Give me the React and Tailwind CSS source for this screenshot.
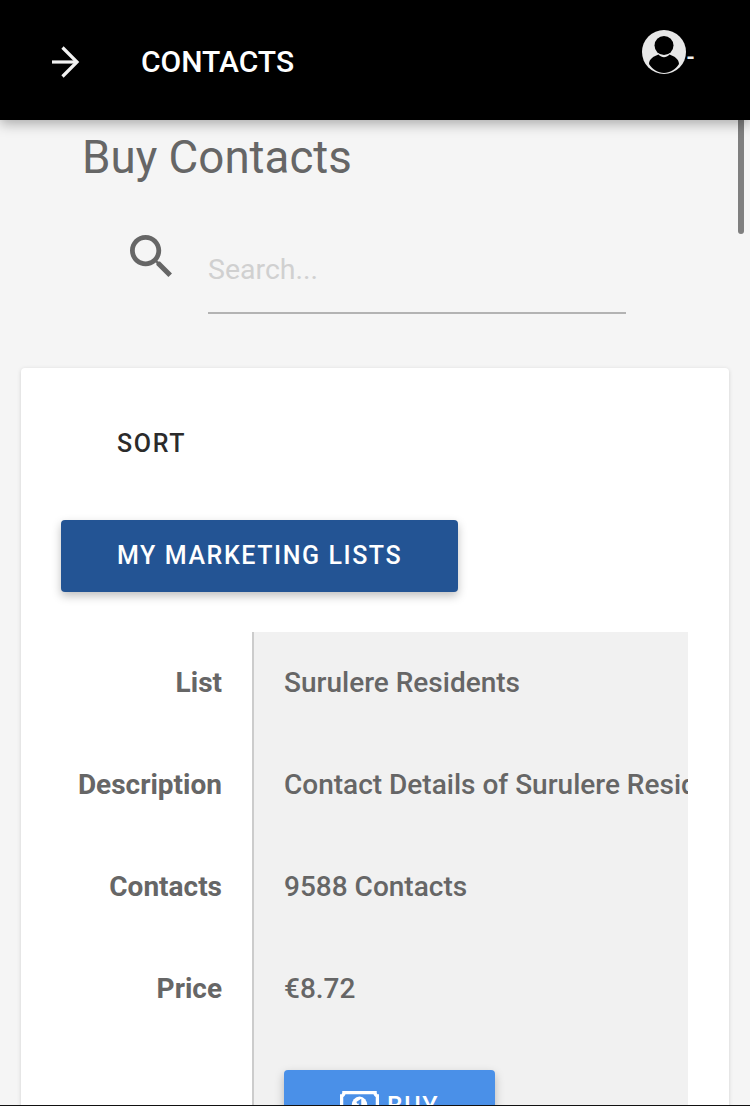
const rows = [
  { label: "List", value: "Surulere Residents" },
  { label: "Description", value: "Contact Details of Surulere Residents" },
  { label: "Contacts", value: "9588 Contacts" },
  { label: "Price", value: "€8.72" },
];

function ArrowIcon() {
  return (
    <svg width="30" height="32" viewBox="0 0 30 32" fill="none" stroke="#f2f2f2" strokeWidth="3.2">
      <path d="M1 16h24" />
      <path d="M11.500 1.500L26 16 11.500 30.500" />
    </svg>
  );
}

function AvatarIcon() {
  return (
    <svg width="44" height="44" viewBox="0 0 44 44">
      <circle cx="22" cy="22" r="22" fill="#e8e8e8" />
      <circle cx="22" cy="15.500" r="9.500" fill="#000" />
      <path d="M7 34c0-5 5-8 9.500-9.500 3.500 3.500 7.500 3.500 11 0 4.500 1.500 9.500 4.500 9.500 9.500-3.500 5.500-9 9-15 9s-11.500-3.500-15-9z" fill="#000" />
    </svg>
  );
}

function SearchIcon() {
  return (
    <svg width="42" height="42" viewBox="3 3 17.5 17.5" fill="#666">
      <path d="M15.5 14h-.79l-.28-.27C15.41 12.59 16 11.11 16 9.5 16 5.91 13.09 3 9.5 3S3 5.91 3 9.5 5.91 16 9.5 16c1.61 0 3.09-.59 4.23-1.57l.27.28v.79l5 4.99L20.49 19l-4.99-5zm-6 0C7.01 14 5 11.990 5 9.500S7.010 5 9.500 5 14 7.010 14 9.500 11.990 14 9.500 14z" />
    </svg>
  );
}

// banknote with notched corners and a coin in the middle
function MoneyIcon() {
  return (
    <svg width="39" height="30" viewBox="0 0 39 30" className="mt-[-3px]">
      <path d="M4 1.500h31c0 2 1.500 3.500 2.500 3.500v20c-1 0-2.500 1.500-2.500 3.500H4c0-2-1.500-3.500-2.500-3.500V5C2.500 5 4 3.500 4 1.500z" fill="none" stroke="#fff" strokeWidth="3.500" />
      <ellipse cx="19.500" cy="15" rx="8" ry="9.500" fill="#fff" />
      <path d="M17 12l3-2v11" fill="none" stroke="#4a90e8" strokeWidth="2.500" />
    </svg>
  );
}

export default function App() {
  return (
    <div className="relative h-[1106px] overflow-hidden bg-[#f5f5f5] font-['Roboto',sans-serif] text-[#666]">
      <header className="relative z-10 flex h-[120px] items-start bg-black pl-[51px] pr-[55px] text-white shadow-[0_4px_12px_rgba(0,0,0,0.3)]">
        <div className="mt-[46px]">
          <ArrowIcon />
        </div>
        <h1 className="ml-[60px] mt-[44px] text-[30px] leading-[35px] font-medium">CONTACTS</h1>
        <div className="ml-auto mt-[30px] flex items-center">
          <AvatarIcon />
          <span className="mt-[12px] text-[22px] leading-none font-bold text-[#f2f2f2]">-</span>
        </div>
      </header>

      {/* scrollbar */}
      <div className="absolute right-0 top-[120px] bottom-0 w-[12px] bg-transparent">
        <div className="h-[114px] w-[6px] rounded-b-[3px] bg-[#7f7f7f]" />
      </div>

      <main className="px-[21px]">
        <h2 className="ml-[61px] mt-[9px] text-[45.700px] leading-[58px] font-normal">Buy Contacts</h2>

        <div className="ml-[109px] mt-[38px] flex items-start">
          <div className="mt-[10px]">
            <SearchIcon />
          </div>
          <input
            className="ml-[36px] mt-[8px] h-[81px] w-[418px] border-b-2 border-[#b3b3b3] bg-transparent pb-[6px] text-[28.500px] outline-none placeholder:text-[#d0d0d0]"
            placeholder="Search..."
          />
        </div>

        <section className="mt-[54px] h-[800px] rounded-t-[4px] bg-white px-[40px] pt-[39px] shadow-[0_1px_4px_rgba(0,0,0,0.15)]">
          <button className="block h-[72px] px-[56px] pt-[2px] text-[25px] font-medium tracking-[1.700px] text-[#2b2b2b]">SORT</button>
          <button className="mt-[41px] block h-[72px] rounded-[4px] bg-[#235494] px-[56px] text-[25px] font-medium tracking-[1.580px] text-white shadow-[0_4px_10px_rgba(0,0,0,0.25)]">
            MY MARKETING LISTS
          </button>

          <div className="mt-[40px] w-[627px] overflow-hidden">
            {rows.map((row) => (
              <div key={row.label} className="flex h-[102px] items-center text-[28px] font-medium">
                <div className="w-[191px] shrink-0 pr-[30px] text-right font-bold">{row.label}</div>
                <div className="flex h-full min-w-0 flex-1 items-center whitespace-nowrap border-l-2 border-[#ccc] bg-[#f1f1f1] pl-[30px]">
                  {row.value}
                </div>
              </div>
            ))}
            <div className="flex h-[102px]">
              <div className="w-[191px] shrink-0" />
              <div className="flex-1 border-l-2 border-[#ccc] bg-[#f1f1f1] pl-[30px] pt-[30px]">
                <button className="flex h-[72px] w-[211px] items-center justify-center gap-[8px] rounded-[4px] bg-[#4a90e8] pt-[2px] text-[25px] font-medium tracking-[1.580px] text-white shadow-[0_4px_10px_rgba(0,0,0,0.25)]">
                  <MoneyIcon />
                  BUY
                </button>
              </div>
            </div>
          </div>
        </section>
      </main>

      {/* bottom edge */}
      <div className="absolute inset-x-0 bottom-0 h-px bg-[#111]" />
    </div>
  );
}
